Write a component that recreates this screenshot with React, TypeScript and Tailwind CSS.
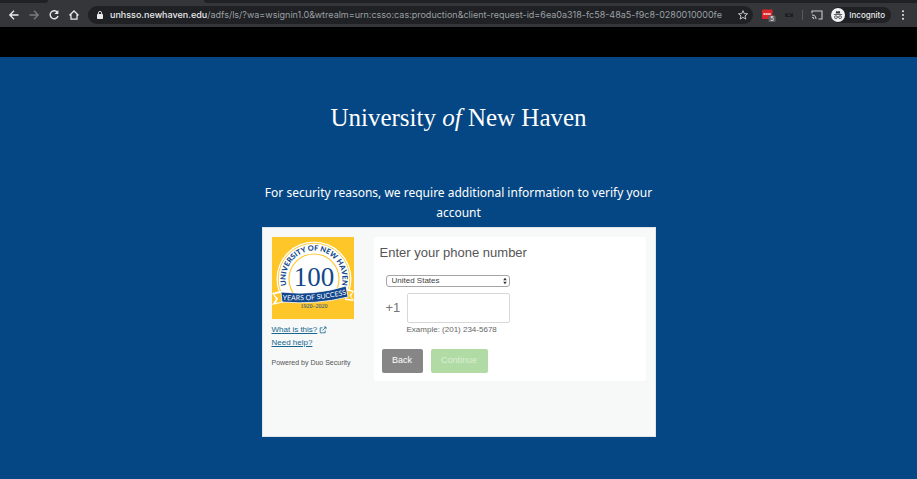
import { useState } from "react";

function BrowserBar() {
  return (
    <header className="bg-[#35363a] font-['Inter',sans-serif] text-[#e8eaed]">
      {/* Bottom edge of the tab strip */}
      <div className="flex h-[3px]">
        <div className="w-12 rounded-br bg-[#202124]" />
        <div className="w-[156px]" />
        <div className="flex-1 rounded-bl bg-[#202124]" />
      </div>
      <div className="flex h-6 items-center pr-2.5 pl-2">
        <nav className="flex items-center gap-2">
          <button aria-label="Back">
            <svg viewBox="0 0 12 12" className="size-3" fill="none" stroke="currentColor" strokeWidth="1.3">
              <path d="M10.5 6H2M6 1.8 1.8 6 6 10.2" />
            </svg>
          </button>
          <button aria-label="Forward" className="text-[#7c7d80]">
            <svg viewBox="0 0 12 12" className="size-3" fill="none" stroke="currentColor" strokeWidth="1.3">
              <path d="M1.5 6H10M6 1.8 10.2 6 6 10.2" />
            </svg>
          </button>
          <button aria-label="Reload">
            <svg viewBox="0 0 12 12" className="size-3" fill="none" stroke="currentColor" strokeWidth="1.4">
              <path d="M9.4 3.4A4 4 0 1 0 10 7" />
              <path d="M10.4 1v4H6.4z" fill="currentColor" stroke="none" />
            </svg>
          </button>
          <button aria-label="Home">
            <svg viewBox="0 0 12 12" className="size-3" fill="none" stroke="currentColor" strokeWidth="1.3">
              <path d="M1.4 6.4 6 2l4.6 4.4M3 5.5v4.7h6V5.5" />
            </svg>
          </button>
        </nav>
        <div className="ml-2 flex h-[18px] min-w-0 flex-1 items-center rounded-full bg-[#202124] pr-1 pl-2">
          <svg viewBox="0 0 8 10" className="h-2.5 w-2 shrink-0">
            <rect x="1" y="4" width="6" height="5" rx="0.7" fill="#e8eaed" />
            <path d="M2.4 4.2V3a1.6 1.6 0 0 1 3.2 0v1.2" fill="none" stroke="#e8eaed" strokeWidth="0.9" />
          </svg>
          <p className="ml-1.5 flex-1 overflow-hidden text-[9px] leading-4 whitespace-nowrap text-[#9aa0a6]">
            <span className="font-medium text-[#e8eaed]">unhsso.newhaven.edu</span>
            /adfs/ls/?wa=wsignin1.0&amp;wtrealm=urn:csso:cas:production&amp;client-request-id=6ea0a318-fc58-48a5-f9c8-0280010000fe
          </p>
          <button aria-label="Bookmark this page">
            <svg viewBox="0 0 12 12" className="size-3" fill="none" stroke="#d5d7da" strokeWidth="0.9" strokeLinejoin="round">
              <path d="m6 1.6 1.2 3 3.3.2L8 6.9l.8 3.2L6 8.4l-2.8 1.7L4 6.9 1.5 4.8l3.3-.2z" />
            </svg>
          </button>
        </div>
        <div className="ml-2 flex items-center gap-2">
          <svg viewBox="0 0 15 14" className="h-3.5 w-[15px]">
            <rect x="1" y="1.5" width="10.5" height="9.5" rx="1" fill="#d9252b" />
            <path d="M2.5 6h7.5" stroke="#fff" strokeWidth="1.5" strokeDasharray="1.5 0.4" />
            <rect x="7.5" y="7.5" width="7" height="6.5" rx="1" fill="#5f6063" />
            <text x="11" y="13" fontSize="6" textAnchor="middle" fill="#fff">5</text>
          </svg>
          <svg viewBox="0 0 10 6" className="h-1.5 w-2.5">
            <path d="M1 1h1.5v1h1l.5-1h2l.5 1h1V1H9v4H1z" fill="#1f2022" />
            <circle cx="5" cy="3" r="0.8" fill="#4b4c50" />
          </svg>
        </div>
        <div className="ml-2 h-2.5 w-px bg-[#5a5b5f]" />
        <button aria-label="Cast" className="ml-2">
          <svg viewBox="0 0 12 10" className="h-2.5 w-3" fill="none" stroke="#c9cbce" strokeWidth="1.1">
            <path d="M1 3.2V1h10v8H7.5M1 5a4 4 0 0 1 4 4M1 7.2A1.8 1.8 0 0 1 2.8 9" />
          </svg>
        </button>
        <button className="ml-2 flex h-4 items-center gap-1 rounded-full bg-[#202124] pr-1.5 text-[8px] font-medium">
          <svg viewBox="0 0 14 14" className="size-3.5">
            <circle cx="7" cy="7" r="7" fill="#f1f3f4" />
            <path d="M4.6 5.6 5.3 3l1.7.5L8.7 3l.7 2.6zM2.8 6h8.4v.8H2.8z" fill="#35363a" />
            <path d="M6.2 9h1.6" stroke="#35363a" strokeWidth="0.7" />
            <circle cx="4.9" cy="9.2" r="1.4" fill="none" stroke="#35363a" strokeWidth="0.8" />
            <circle cx="9.1" cy="9.2" r="1.4" fill="none" stroke="#35363a" strokeWidth="0.8" />
          </svg>
          Incognito
        </button>
        <button aria-label="Menu" className="ml-2">
          <svg viewBox="0 0 8 12" className="h-3 w-2" fill="#e8eaed">
            <circle cx="4" cy="2.3" r="1" />
            <circle cx="4" cy="6" r="1" />
            <circle cx="4" cy="9.7" r="1" />
          </svg>
        </button>
      </div>
    </header>
  );
}

function CentennialLogo() {
  return (
    <svg viewBox="0 0 82 82" className="w-full" role="img" aria-label="University of New Haven, 100 years of success">
      <rect width="82" height="82" fill="#ffc629" />
      <circle cx="42" cy="42" r="37.5" fill="#fff" />
      <circle cx="42" cy="42" r="35.8" fill="none" stroke="#ffc629" strokeWidth="0.9" />
      <circle cx="42" cy="42" r="25" fill="none" stroke="#ffc629" strokeWidth="1.2" />
      <path d="M0 61h82v21H0z" fill="#ffc629" />
      <path d="M0 56l13-3v12l-13 3 4-6zM82 54l-9-3v12l9 1-3-5z" fill="#fff" />
      <path d="M2 57.5l10-2.5v9l-8 2 2-4.5zM80.5 55l-7-2v8.5l7 1-3-4z" fill="#ffc629" />
      <path d="M9 55q34 4 65-6l2 11q-32 8-66 5z" fill="#13488c" stroke="#fff" strokeWidth="0.8" />
      <path id="arch" d="M15.2 51A28.300 28.300 0 1 1 68.800 51" fill="none" />
      <path id="ribbon" d="M8 62.8q34 2.5 69-6" fill="none" />
      <g fill="#13488c" textAnchor="middle">
        <text fontSize="7.4" fontWeight="900" className="font-['Lato',sans-serif]">
          <textPath href="#arch" startOffset="50%">UNIVERSITY OF NEW HAVEN</textPath>
        </text>
        <text x="42" y="49" fontSize="27" className="font-['Liberation_Serif',serif]">100</text>
        <text x="42" y="71" fontSize="6" className="font-['Liberation_Serif',serif]">1920–2020</text>
      </g>
      <text fontSize="7" fill="#fff" textAnchor="middle" className="font-['Lato',sans-serif]">
        <textPath href="#ribbon" startOffset="50%">YEARS OF SUCCESS</textPath>
      </text>
    </svg>
  );
}

function PhoneForm() {
  const [phone, setPhone] = useState("");

  return (
    <form
      onSubmit={(e) => e.preventDefault()}
      className="h-36 flex-1 rounded-xs bg-white px-1.5 pt-1.5 text-[#666]"
    >
      <h1 className="text-[13px] leading-5 text-[#555]">Enter your phone number</h1>
      <div className="mt-3 ml-1.5 w-[124px]">
        <div className="relative">
          <select
            aria-label="Country"
            defaultValue="us"
            className="block h-3 w-full appearance-none rounded-[3px] border border-[#a6a6a6] bg-white pl-[5px] text-[8px] leading-[10px] text-[#444]"
          >
            <option value="us">United States</option>
          </select>
          <svg viewBox="0 0 4 8" className="pointer-events-none absolute top-0.5 right-[3px] h-2 w-1" fill="#333">
            <path d="M2 .8 3.8 3.2H.2zM2 7.2.2 4.8h3.6z" />
          </svg>
        </div>
        <div className="mt-1.5 flex items-center">
          <label htmlFor="phone" className="w-[21px] text-[13px] text-[#777]">+1</label>
          <input
            id="phone"
            type="tel"
            value={phone}
            onChange={(e) => setPhone(e.target.value)}
            className="h-[30px] min-w-0 flex-1 rounded-xs border border-[#d8d8d8] px-2 text-[13px] outline-none"
          />
        </div>
        <p className="ml-[21px] text-[8px] leading-[14px] whitespace-nowrap">Example: (201) 234-5678</p>
      </div>
      <div className="mt-3 ml-0.5 flex gap-2 text-[9px] text-white">
        <button type="button" className="h-6 w-[41px] rounded-xs bg-[#868686]">Back</button>
        <button type="submit" disabled className="h-6 w-[57px] rounded-xs bg-[#b1dba5] text-[#d9efd2]">
          Continue
        </button>
      </div>
    </form>
  );
}

export default function App() {
  return (
    <div className="flex min-h-screen flex-col bg-[#054784]">
      <BrowserBar />
      <div className="h-[30px] bg-black" />
      <main className="flex flex-1 flex-col items-center pt-11 pb-8">
        <p className="text-[25px] leading-[34px] text-white font-['Liberation_Serif',serif]">
          University <em>of</em> New Haven
        </p>
        <p className="mt-12 w-[394px] text-center text-[12px] leading-5 text-white font-['Noto_Sans',sans-serif]">
          For security reasons, we require additional information to verify your account
        </p>
        <section className="mt-1 flex min-h-[210px] w-[394px] items-start gap-5 border border-[#dfe5e8] bg-[#f6f9f8] p-[9px] font-['Liberation_Sans',sans-serif]">
          <aside className="w-[82px] text-[8px] text-[#555]">
            <CentennialLogo />
            <div className="mt-1 flex flex-col items-start leading-[13px] text-[#16668f]">
              <a href="#what" className="flex items-center gap-0.5">
                <span className="underline">What is this?</span>
                <svg viewBox="0 0 8 8" className="size-2" fill="none" stroke="currentColor" strokeWidth="0.8">
                  <path d="M3.5 1.8H1.2v5h5V4.5M3.5 4.5 7 1M4.8 1H7v2.2" />
                </svg>
              </a>
              <a href="#help" className="underline">Need help?</a>
            </div>
            <p className="mt-2 text-[7px] leading-3 whitespace-nowrap">Powered by Duo Security</p>
          </aside>
          <PhoneForm />
        </section>
      </main>
    </div>
  );
}
